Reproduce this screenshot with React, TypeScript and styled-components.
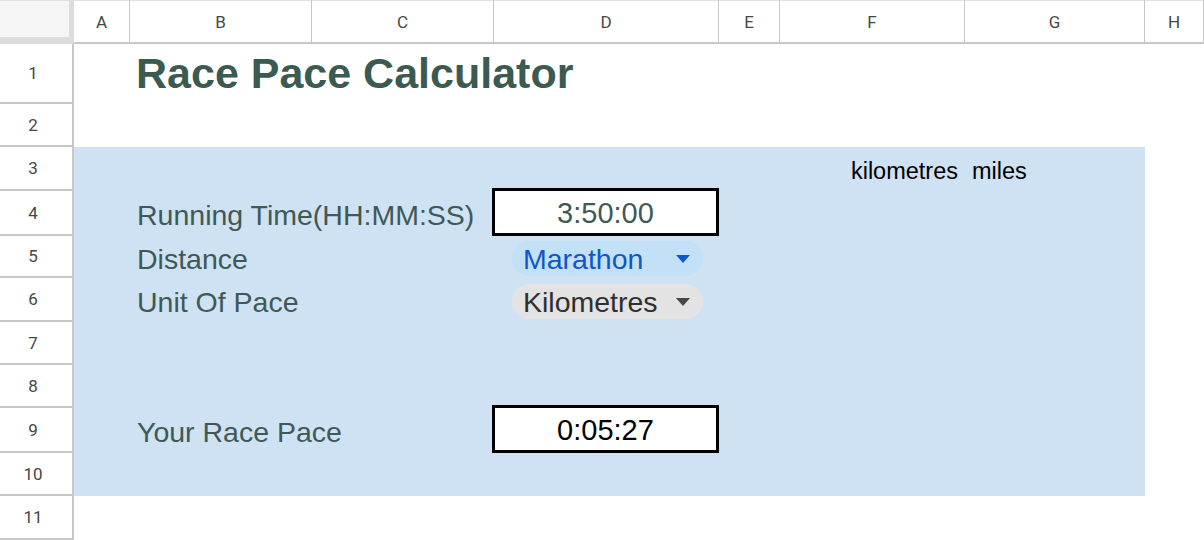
import styled, { createGlobalStyle } from 'styled-components';

const GlobalStyle = createGlobalStyle`
  html, body {
    margin: 0;
    padding: 0;
    background: #ffffff;
  }
  body {
    font-family: 'Liberation Sans', Arial, sans-serif;
  }
`;

const COLUMNS = ['A', 'B', 'C', 'D', 'E', 'F', 'G', 'H'];
const ROWS = [1, 2, 3, 4, 5, 6, 7, 8, 9, 10, 11];

export default function App(): JSX.Element {
  return (
    <>
      <GlobalStyle />
      <Sheet>
        <Corner />
        {COLUMNS.map((c, i) => (
          <ColHeader key={c} $col={i + 2}>
            {c}
          </ColHeader>
        ))}
        {ROWS.map((r) => (
          <RowHeader key={r} $row={r + 1}>
            {r}
          </RowHeader>
        ))}

        <Panel />

        <Title>Race Pace Calculator</Title>

        <Label $row={5}>Running Time(HH:MM:SS)</Label>
        <Label $row={6}>Distance</Label>
        <Label $row={7}>Unit Of Pace</Label>
        <Label $row={10}>Your Race Pace</Label>

        <UnitLeft>kilometres</UnitLeft>
        <UnitRight>miles</UnitRight>

        <ValueBox $row={5} $tone="#3f5955">
          3:50:00
        </ValueBox>

        <Chip $row={6} $bg="#c2e1f7" $fg="#1155cc" $top={5}>
          <span>Marathon</span>
          <Caret $fg="#0b57d0" />
        </Chip>
        <Chip $row={7} $bg="#e3e3e3" $fg="#2f2f2f" $top={6}>
          <span>Kilometres</span>
          <Caret $fg="#444746" />
        </Chip>

        <ValueBox $row={10} $tone="#000000">
          0:05:27
        </ValueBox>
      </Sheet>
    </>
  );
}

function Caret({ $fg }: { $fg: string }): JSX.Element {
  return (
    <CaretSvg width="16" height="10" viewBox="0 0 16 10">
      <path d="M1 1 L15 1 L8 9 Z" fill={$fg} />
    </CaretSvg>
  );
}

const Sheet = styled.div`
  display: grid;
  grid-template-columns: 74px 56px 182px 182px 225px 61px 185px 180px 59px;
  grid-template-rows: 44px 60px 43px 44px 45px 42px 44px 43px 43px 45px 43px 44px;
  width: 1204px;
  height: 540px;
  overflow: hidden;
`;

const Corner = styled.div`
  grid-column: 1;
  grid-row: 1;
  box-sizing: border-box;
  background: #f5f5f5;
  border-right: 5px solid #dcdcdc;
  border-bottom: 7px solid #dcdcdc;
  border-top: 1px solid #e0e0e0;
`;

const ColHeader = styled.div<{ $col: number }>`
  grid-column: ${(p) => p.$col};
  grid-row: 1;
  box-sizing: border-box;
  display: flex;
  align-items: center;
  justify-content: center;
  padding-top: 1px;
  border-top: 1px solid #e0e0e0;
  border-right: 1px solid #c7c7c7;
  border-bottom: 2px solid #c7c7c7;
  font-family: Roboto, 'Liberation Sans', sans-serif;
  font-size: 17px;
  color: #444746;
`;

const RowHeader = styled.div<{ $row: number }>`
  grid-column: 1;
  grid-row: ${(p) => p.$row};
  box-sizing: border-box;
  display: flex;
  align-items: center;
  justify-content: center;
  padding-right: 6px;
  border-right: 2px solid #c7c7c7;
  border-bottom: 2px solid #c7c7c7;
  font-family: Roboto, 'Liberation Sans', sans-serif;
  font-size: 17px;
  color: #444746;
`;

const Panel = styled.div`
  grid-column: 2 / 9;
  grid-row: 4 / 12;
  background: #cfe2f3;
`;

const Title = styled.h1`
  grid-column: 3 / 8;
  grid-row: 2;
  margin: 0;
  padding-left: 6px;
  padding-bottom: 2px;
  align-self: center;
  font-family: 'Liberation Sans', Arial, sans-serif;
  font-size: 43px;
  font-weight: 700;
  color: #3b5b51;
  white-space: nowrap;
`;

const Label = styled.div<{ $row: number }>`
  grid-column: 3 / 5;
  grid-row: ${(p) => p.$row};
  align-self: center;
  padding-left: 7px;
  padding-top: 4px;
  font-size: 28.5px;
  color: #3f5955;
  white-space: nowrap;
`;

const UnitLeft = styled.div`
  grid-column: 7;
  grid-row: 4;
  align-self: center;
  justify-self: end;
  padding-right: 7px;
  padding-top: 4px;
  font-size: 23.5px;
  color: #000000;
`;

const UnitRight = styled(UnitLeft)`
  grid-column: 8;
  justify-self: start;
  padding-right: 0;
  padding-left: 7px;
`;

const ValueBox = styled.div<{ $row: number; $tone: string }>`
  grid-column: 5;
  grid-row: ${(p) => p.$row};
  box-sizing: border-box;
  margin: -3px 0 0 -2px;
  padding-top: 2px;
  display: flex;
  align-items: center;
  justify-content: center;
  background: #ffffff;
  border: 3px solid #000000;
  font-size: 29px;
  color: ${(p) => p.$tone};
  z-index: 1;
`;

const Chip = styled.div<{ $row: number; $bg: string; $fg: string; $top: number }>`
  grid-column: 5;
  grid-row: ${(p) => p.$row};
  align-self: start;
  box-sizing: border-box;
  margin: ${(p) => p.$top}px 0 0 18px;
  width: 191px;
  height: 35px;
  padding: 1px 12px 0 11px;
  display: flex;
  align-items: center;
  justify-content: space-between;
  border-radius: 17px;
  background: ${(p) => p.$bg};
  font-size: 28.5px;
  color: ${(p) => p.$fg};
`;

const CaretSvg = styled.svg`
  display: block;
  flex: none;
`;
